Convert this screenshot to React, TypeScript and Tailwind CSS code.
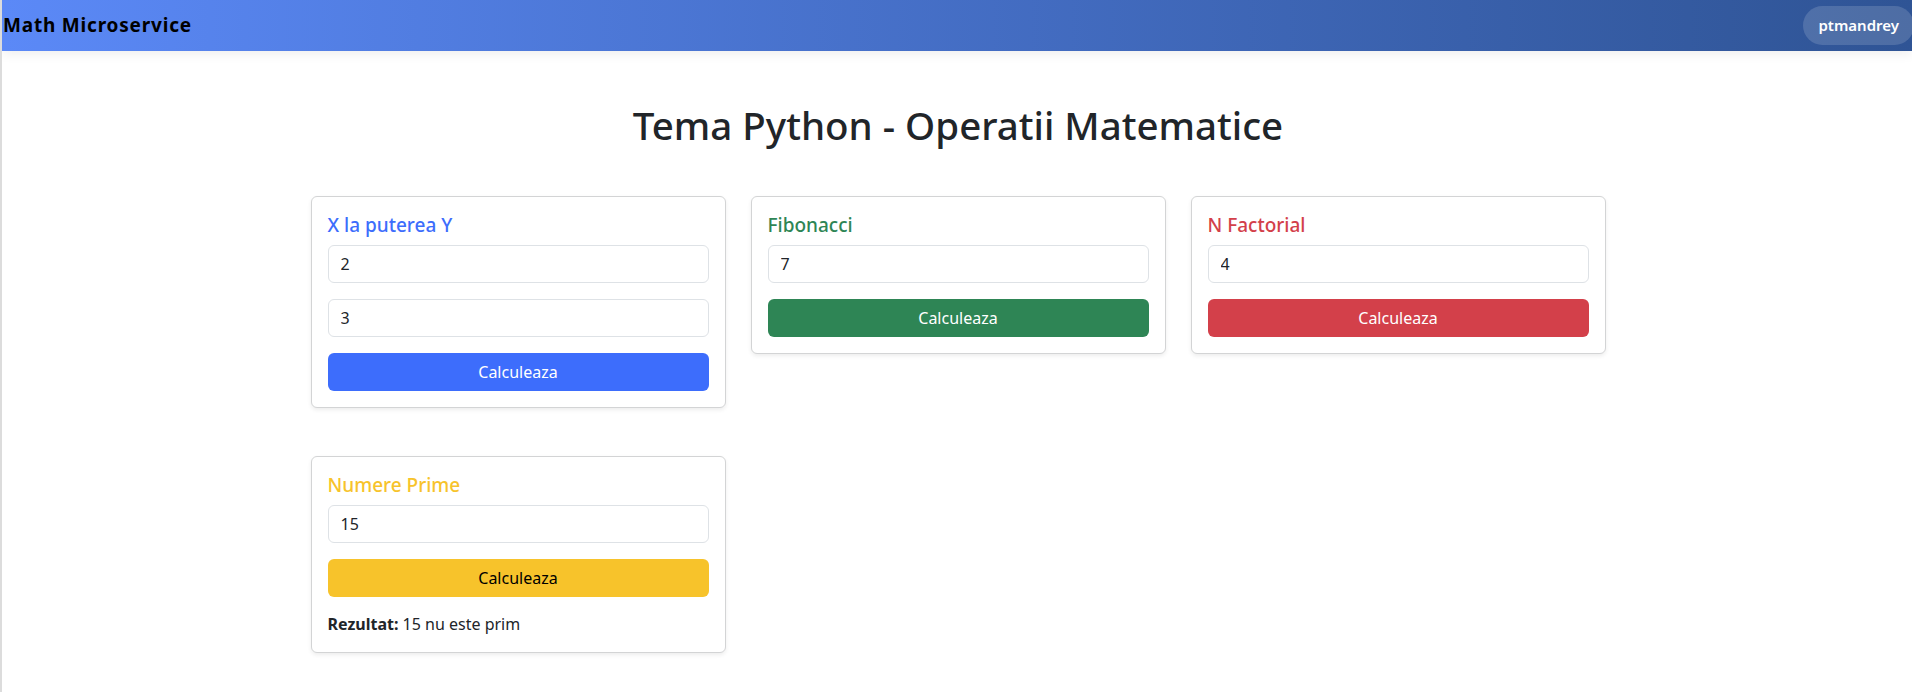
import React from 'react';

// one calculator card: title, one or more inputs, a button and an optional result
interface CalcCardProps {
  title: string;
  titleClass: string;
  buttonClass: string;
  values: string[];
  result?: React.ReactNode;
}

function CalcCard({ title, titleClass, buttonClass, values, result }: CalcCardProps) {
  return (
    <div className="self-start rounded-md border border-[#d3d4d5] bg-white p-4 shadow-[0_2px_4px_rgba(0,0,0,0.075)]">
      <h5 className={`mb-2 text-[19px] leading-[24px] font-medium ${titleClass}`}>{title}</h5>
      {values.map((v, i) => (
        <input
          key={i}
          className="mb-4 block h-[38px] w-full rounded-md border border-[#dee2e6] bg-white px-3 text-[16px] text-[#212529] focus:outline-none"
          defaultValue={v}
          type="number"
        />
      ))}
      <button className={`block h-[38px] w-full rounded-md text-[16px] ${buttonClass}`}>Calculeaza</button>
      {result && <p className="mt-[15px] text-[16px] leading-[24px] text-[#212529]">{result}</p>}
    </div>
  );
}

export default function App() {
  return (
    <div className="min-h-screen overflow-x-hidden border-l-2 border-[#dcdcdc] bg-white font-['Noto_Sans',sans-serif] text-[#212529]">
      <header className="relative z-10 flex h-[51px] items-center justify-between bg-linear-to-r from-[#5b89f7] to-[#2f5495] shadow-[0_4px_10px_rgba(0,0,0,0.06)]">
        <span className="pl-px text-[19px] font-bold tracking-[0.8px] text-black">Math Microservice</span>
        <span className="mr-[-2px] flex h-[39px] items-center rounded-full bg-white/15 px-[15px] text-[15px] font-semibold text-white">
          ptmandrey
        </span>
      </header>

      <main className="pl-[2px]">
        <h1 className="mt-[50px] mb-[47px] text-center text-[38.5px] leading-[48px] font-medium text-[#212529]">
          Tema Python - Operatii Matematice
        </h1>

        <div className="grid grid-cols-[415px_415px_415px] justify-center gap-x-[25px] gap-y-[48px]">
          <CalcCard
            title="X la puterea Y"
            titleClass="text-[#3d6dfc]"
            buttonClass="bg-[#3d6dfc] text-white"
            values={['2', '3']}
          />
          <CalcCard
            title="Fibonacci"
            titleClass="text-[#2e8555]"
            buttonClass="bg-[#2e8555] text-white"
            values={['7']}
          />
          <CalcCard
            title="N Factorial"
            titleClass="text-[#d3404a]"
            buttonClass="bg-[#d3404a] text-white"
            values={['4']}
          />
          <CalcCard
            title="Numere Prime"
            titleClass="text-[#f7c32b]"
            buttonClass="bg-[#f7c32b] text-black"
            values={['15']}
            result={
              <>
                <strong className="font-bold">Rezultat:</strong> 15 nu este prim
              </>
            }
          />
        </div>
      </main>
    </div>
  );
}
